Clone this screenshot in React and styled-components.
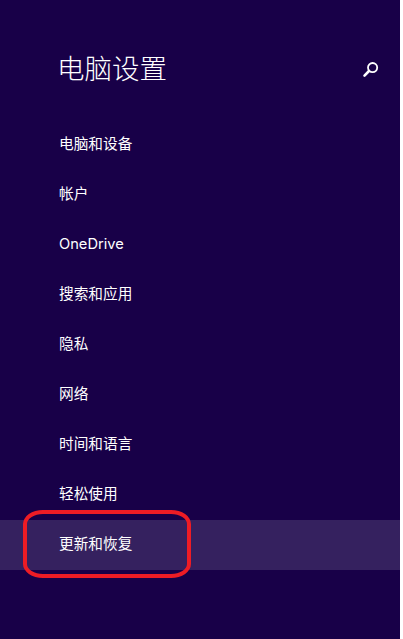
import styled, { createGlobalStyle } from "styled-components";

const GlobalStyle = createGlobalStyle`
  html, body {
    margin: 0;
    padding: 0;
    background: #ffffff;
  }
`;

const Pane = styled.div`
  position: relative;
  width: 400px;
  height: 639px;
  background: #180048;
  color: #ffffff;
  font-family: "Inter", "Noto Sans CJK SC", sans-serif;
  overflow: hidden;
`;

const Header = styled.header`
  display: flex;
  align-items: center;
  justify-content: space-between;
  height: 40px;
  padding: 49px 20px 0 57px;
`;

const Title = styled.h1`
  margin: 0;
  font-size: 27.5px;
  font-weight: 300;
  line-height: 40px;
`;

const SearchButton = styled.div`
  display: flex;
  width: 18px;
  height: 18px;
`;

const Menu = styled.nav`
  display: flex;
  flex-direction: column;
  margin-top: 31px;
`;

const MenuItem = styled.div`
  display: flex;
  align-items: center;
  box-sizing: border-box;
  height: 50px;
  padding: 0 0 2px 59px;
  font-size: 14.67px;
  line-height: 20px;
  background: ${({ $active }) => ($active ? "#35215f" : "transparent")};
`;

const Highlight = styled.div`
  position: absolute;
  left: 23px;
  top: 510px;
  width: 168px;
  height: 68px;
  box-sizing: border-box;
  border: 4px solid #ee1c25;
  border-radius: 20px / 14px;
`;

const items = [
  "电脑和设备",
  "帐户",
  "OneDrive",
  "搜索和应用",
  "隐私",
  "网络",
  "时间和语言",
  "轻松使用",
  "更新和恢复",
];

const App = () => {
  return (
    <>
      <GlobalStyle />
      <Pane>
        <Header>
          <Title>电脑设置</Title>
          <SearchButton>
            <svg width="18" height="18" viewBox="0 0 18 18" fill="none" stroke="#ffffff">
              <circle cx="10.6" cy="7.6" r="4.6" strokeWidth="1.8" />
              <path d="M7 11 L2.5 15.6" strokeWidth="2.6" strokeLinecap="round" />
            </svg>
          </SearchButton>
        </Header>
        <Menu>
          {items.map((item, i) => (
            <MenuItem key={item} $active={i === items.length - 1}>
              {item}
            </MenuItem>
          ))}
        </Menu>
        <Highlight />
      </Pane>
    </>
  );
};

export default App;
